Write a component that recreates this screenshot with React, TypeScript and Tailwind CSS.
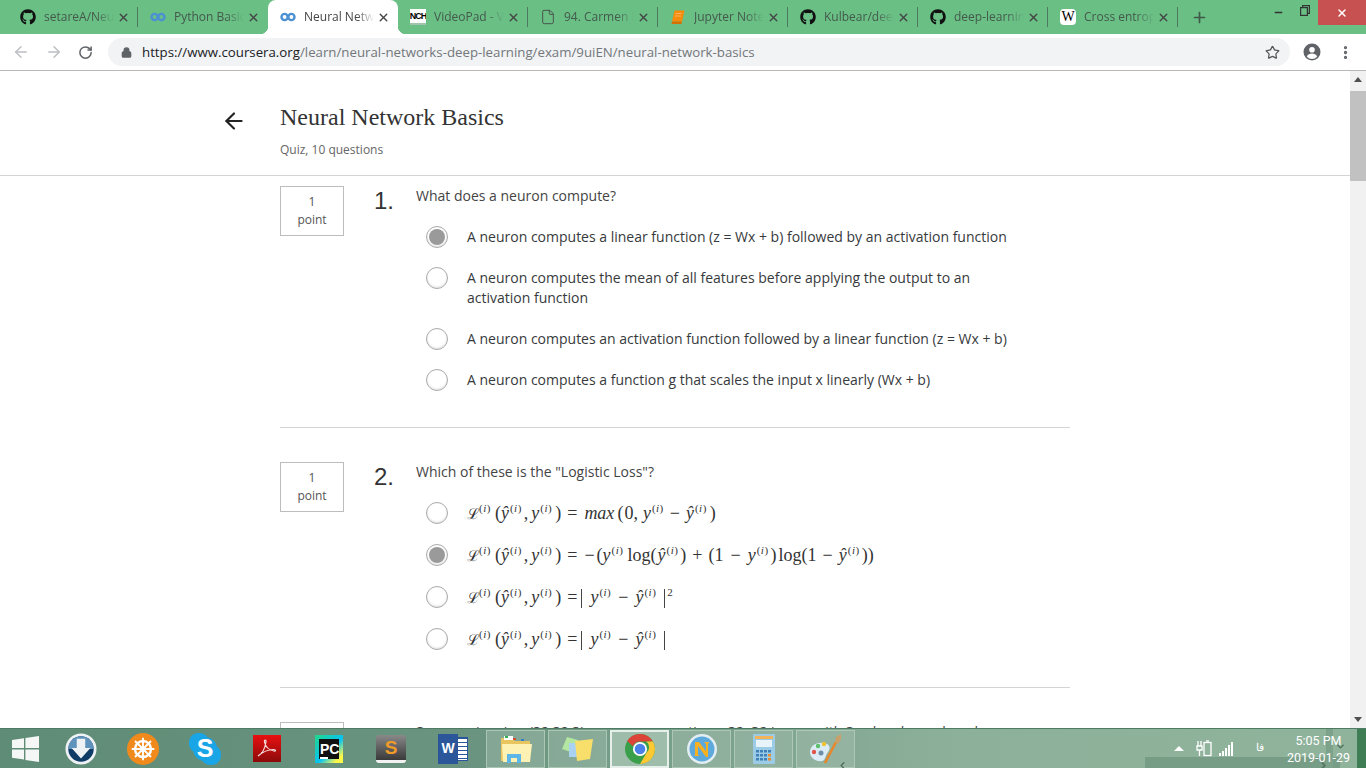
import { ReactNode } from 'react'
import { ArrowLeft, ArrowRight, RotateCw, Lock, Star, EllipsisVertical, X, Plus, File, Minus, ChevronLeft, ChevronDown, ChevronRight } from 'lucide-react'
import { FaGithub } from 'react-icons/fa'

function CourseraIcon() {
  return (
    <svg width="16" height="16" viewBox="0 0 16 16" fill="none" stroke="#4a90d2" strokeWidth="2.4">
      <circle cx="4.6" cy="8" r="3.1" />
      <circle cx="11.4" cy="8" r="3.1" />
    </svg>
  )
}

function NchIcon() {
  return (
    <div className="w-4 h-4 bg-white border-b-2 border-[#9fc4ab] flex items-center justify-center overflow-hidden">
      <span className="text-[9px] leading-none font-black tracking-[-1px] text-black font-['Liberation_Sans',sans-serif]">NCH</span>
    </div>
  )
}

function JupyterIcon() {
  return (
    <svg width="16" height="16" viewBox="0 0 16 16">
      <path d="M4.500 1.500h10l-2.500 11H2z" fill="#f58a0b" />
      <path d="M2 12.500h10l-.5 2.500H1.500z" fill="#d56f00" />
      <path d="M5.500 4.500h6M5 7h6" stroke="#fbb45e" strokeWidth="1" />
    </svg>
  )
}

function WikiIcon() {
  return (
    <div className="w-4 h-4 bg-white rounded-sm flex items-center justify-center text-[14px] leading-none text-black font-['Liberation_Serif',serif]">W</div>
  )
}

const tabs: { title: string; icon: ReactNode; active?: boolean }[] = [
  { title: 'setareA/Neural', icon: <FaGithub size={16} color="#111" /> },
  { title: 'Python Basics', icon: <CourseraIcon /> },
  { title: 'Neural Network', icon: <CourseraIcon />, active: true },
  { title: 'VideoPad - Video', icon: <NchIcon /> },
  { title: '94. Carmen Fantasy', icon: <File size={16} strokeWidth={1.3} color="#444" /> },
  { title: 'Jupyter Notebook', icon: <JupyterIcon /> },
  { title: 'Kulbear/deep', icon: <FaGithub size={16} color="#111" /> },
  { title: 'deep-learning', icon: <FaGithub size={16} color="#111" /> },
  { title: 'Cross entropy', icon: <WikiIcon /> },
]

function Tab({ title, icon, active, divider }: { title: string; icon: ReactNode; active?: boolean; divider: boolean }) {
  return (
    <div className={`relative w-[130px] h-[34px] flex items-center pl-[12px] shrink-0 ${active ? 'bg-white rounded-t-lg' : ''}`}>
      <div className="w-4 h-4 flex items-center justify-center shrink-0">{icon}</div>
      <div className={`ml-2 w-[70px] overflow-hidden whitespace-nowrap text-[12px] [mask-image:linear-gradient(to_right,black_75%,transparent)] ${active ? 'text-[#444]' : 'text-[#44594c]'}`}>
        {title}
      </div>
      <X size={13} strokeWidth={2.6} color="#444" className="ml-[3px] shrink-0" />
      {divider && <div className="absolute right-0 top-[7px] h-[20px] w-px bg-[#4d7a5e]" />}
      {active && (
        <>
          <div className="absolute -left-[8px] bottom-0 w-[8px] h-[8px] bg-[radial-gradient(circle_at_0_0,#6abf85_8px,white_8.500px)]" />
          <div className="absolute -right-[8px] bottom-0 w-[8px] h-[8px] bg-[radial-gradient(circle_at_100%_0,#6abf85_8px,white_8.500px)]" />
        </>
      )}
    </div>
  )
}

function TabBar() {
  return (
    <div className="h-[34px] bg-[#6abf85] flex pl-[8px] shrink-0 font-['Open_Sans',sans-serif]">
      {tabs.map((t, i) => (
        <Tab key={t.title} {...t} divider={!t.active && i !== 1} />
      ))}
      <div className="w-[42px] flex items-center justify-center">
        <Plus size={17} strokeWidth={2.4} color="#3f5a49" />
      </div>
      <div className="flex-1 flex justify-end items-start">
        <div className="w-[25px] h-[25px] flex items-center justify-center"><Minus size={11} strokeWidth={3} color="#333" /></div>
        <div className="w-[27px] h-[20px] flex items-center justify-center">
          <svg width="10" height="11" viewBox="0 0 10 11" fill="none" stroke="#333" strokeWidth="1.2"><rect x="0.6" y="2.6" width="6.8" height="7.8" /><path d="M2.6 2.4V.6h6.8v7.8H7.6" /></svg>
        </div>
        <div className="w-[48px] h-[25px] bg-[#c75050] flex items-center justify-center"><X size={12} strokeWidth={3} color="#fff" /></div>
      </div>
    </div>
  )
}

function Toolbar() {
  return (
    <div className="h-[37px] bg-white border-b border-[#b8b8b8] flex items-center shrink-0 font-['Open_Sans',sans-serif]">
      <div className="w-[108px] flex items-center pl-[12px] gap-[15px]">
        <ArrowLeft size={18} strokeWidth={2} color="#bcbfc3" />
        <ArrowRight size={18} strokeWidth={2} color="#bcbfc3" />
        <RotateCw size={15} strokeWidth={2.4} color="#5f6368" />
      </div>
      <div className="w-[1182px] h-[28px] bg-[#f1f3f4] rounded-full flex items-center pl-[13px] pr-[10px]">
        <Lock size={11} strokeWidth={3} color="#5f6368" fill="#5f6368" />
        <div className="ml-[10px] text-[13.250px] leading-[28px] text-[#73777c] whitespace-nowrap">
          <span className="text-[#202124]">https://www.coursera.org</span>/learn/neural-networks-deep-learning/exam/9uiEN/neural-network-basics
        </div>
        <Star size={15} strokeWidth={2} color="#555" className="ml-auto" />
      </div>
      <div className="flex-1 flex items-center pl-[13px]">
        <svg width="18" height="18" viewBox="0 0 18 18"><circle cx="9" cy="9" r="8.5" fill="#5f6368" /><circle cx="9" cy="6.8" r="2.8" fill="#fff" /><path d="M3.8 13.4c1-2 3.2-2.8 5.2-2.8s4.2.8 5.2 2.8A6.6 6.6 0 0 1 9 16a6.6 6.6 0 0 1-5.2-2.6z" fill="#fff" /></svg>
        <EllipsisVertical size={17} strokeWidth={2.6} color="#5f6368" className="ml-[16px]" />
      </div>
    </div>
  )
}

function Radio({ checked }: { checked?: boolean }) {
  return (
    <div className="w-[22px] h-[22px] -my-px rounded-full border border-[#aaa] bg-white flex items-center justify-center shrink-0 shadow-[inset_0_-1px_2px_rgba(0,0,0,0.12)]">
      {checked && <div className="w-[16px] h-[16px] rounded-full bg-[#9a9a9a]" />}
    </div>
  )
}

function Option({ checked, children }: { checked?: boolean; children: ReactNode }) {
  return (
    <div className="flex items-start pl-[10px]">
      <Radio checked={checked} />
      <div className="ml-[19px] w-[540px] text-[14px] leading-[20px] text-[#373a3c]">{children}</div>
    </div>
  )
}

function Question({ n, title, gap, children }: { n: number; title: string; gap: string; children: ReactNode }) {
  return (
    <div className="flex">
      <div className="w-[64px] h-[50px] border border-[#bdbdbd] flex flex-col items-center justify-center text-[12px] leading-[18px] text-[#555] shrink-0">
        <span>1</span>
        <span>point</span>
      </div>
      <div className="w-[42px] ml-[30px] text-[24px] leading-[30px] text-[#333] font-['Liberation_Sans',sans-serif] shrink-0">{n}.</div>
      <div className="flex-1">
        <div className="w-[570px] text-[14px] leading-[20px] text-[#444]">{title}</div>
        <div className={`flex flex-col ${gap}`}>{children}</div>
      </div>
    </div>
  )
}

// superscript "(i)" with the width the typeset formula has
const I = () => <span className="ml-[1px] text-[11px] leading-none tracking-[0.5px] relative -top-[7px]">(<i>i</i>)</span>
const Yh = () => <><i>ŷ</i><I /></>
const Y = () => <><i>y</i><I /></>
const Eq = () => <span className="ml-[6px] mr-[7px]">=</span>
const Sub = () => <span className="mx-[6px]">−</span>
const Bar = ({ className }: { className: string }) => <span className={`inline-block w-px h-[19px] bg-[#444] align-[-5px] ${className}`} />

const LossHead = () => (
  <>
    <span className="inline-block w-[11px] font-['DejaVu_Serif',serif] text-[15px]">ℒ</span>
    <I />
    <span className="ml-[4px]">(</span>
    <Yh />
    <span className="ml-[2px] mr-[3px]">,</span>
    <Y />
    <span className="ml-[3px]">)</span>
  </>
)

function MathLine({ children }: { children: ReactNode }) {
  return <div className="h-[20px] font-['Liberation_Serif',serif] text-[18px] leading-[20px] text-[#333] whitespace-nowrap">{children}</div>
}

function Quiz() {
  return (
    <div className="flex-1 min-w-0 overflow-hidden flex flex-col font-['Open_Sans',sans-serif]">
      <div className="h-[105px] border-b border-[#d4d4d4] pl-[221px] flex shrink-0">
        <div className="pt-[37px] w-[59px]"><ArrowLeft size={26} strokeWidth={2} color="#222" /></div>
        <div className="pt-[32px]">
          <div className="text-[24px] leading-[28px] text-[#333] font-['Liberation_Serif',serif]">Neural Network Basics</div>
          <div className="mt-[9px] text-[12px] leading-[20px] text-[#666]">Quiz, 10 questions</div>
        </div>
      </div>
      <div className="flex-1 pl-[280px] pt-[10px] w-[1070px] overflow-hidden">
        <Question n={1} title="What does a neuron compute?" gap="mt-[21px] gap-[21px]">
          <Option checked>A neuron computes a linear function (z = Wx + b) followed by an activation function</Option>
          <Option>A neuron computes the mean of all features before applying the output to an activation function</Option>
          <Option>A neuron computes an activation function followed by a linear function (z = Wx + b)</Option>
          <Option>A neuron computes a function g that scales the input x linearly (Wx + b)</Option>
        </Question>
        <div className="h-px bg-[#d4d4d4] mt-[37px] mb-[34px]" />
        <Question n={2} title={'Which of these is the "Logistic Loss"?'} gap="mt-[21px] gap-[22px]">
          <Option>
            <MathLine>
              <LossHead /><Eq /><i>max</i><span className="ml-[3px]">(</span><span className="ml-px">0</span>,<span className="ml-[5px]" /><Y /><Sub /><Yh /><span className="ml-[3px]">)</span>
            </MathLine>
          </Option>
          <Option checked>
            <MathLine>
              <LossHead /><Eq />−<span className="ml-[2px]">(</span><Y /><span className="ml-[4px]">log</span>(<span className="ml-px" /><Yh /><span className="ml-[2px]">)</span><span className="mx-[6px]">+</span>(1<span className="mx-[7px]">−</span><Y /><span className="ml-[2px]">)</span><span className="ml-[2px]">log</span>(1<Sub /><Yh /><span className="ml-[2px]">))</span>
            </MathLine>
          </Option>
          <Option>
            <MathLine>
              <LossHead /><Eq /><Bar className="-ml-[3px] mr-[8px]" /><Y /><span className="mx-[7px]">−</span><Yh /><Bar className="ml-[8px]" /><span className="ml-[2px] text-[11px] relative -top-[7px]">2</span>
            </MathLine>
          </Option>
          <Option>
            <MathLine>
              <LossHead /><Eq /><Bar className="-ml-[3px] mr-[8px]" /><Y /><span className="mx-[7px]">−</span><Yh /><Bar className="ml-[8px]" />
            </MathLine>
          </Option>
        </Question>
        <div className="h-px bg-[#d4d4d4] mt-[38px] mb-[34px]" />
        <Question n={3} title="Suppose img is a (32,32,3) array, representing a 32x32 image with 3 color channels red, green and blue. How do you reshape this into a column vector?" gap="">
          <span />
        </Question>
      </div>
    </div>
  )
}

function Scrollbar() {
  return (
    <div className="w-[16px] bg-[#f1f1f1] flex flex-col items-center shrink-0">
      <div className="h-[17px] flex items-center justify-center"><div className="w-0 h-0 border-x-[4px] border-x-transparent border-b-[5px] border-b-[#505050]" /></div>
      <div className="w-full h-[90px] mt-[3px] bg-[#c1c1c1]" />
      <div className="mt-auto h-[17px] flex items-center justify-center"><div className="w-0 h-0 border-x-[4px] border-x-transparent border-t-[5px] border-t-[#505050]" /></div>
    </div>
  )
}

function WinLogo() {
  return (
    <svg width="27" height="26" viewBox="0 0 27 26" fill="#f4f7f5">
      <path d="M0 4l12-1.8V12H0zM13.4 2L27 0v12H13.4zM0 13.4h12v10L0 21.8zM13.4 13.4H27V26l-13.6-2z" />
    </svg>
  )
}

const pinned: ReactNode[] = [
  <svg key="dl" width="32" height="32" viewBox="0 0 34 34"><circle cx="17" cy="17" r="16.500" fill="#eef2f5" /><circle cx="17" cy="17" r="13.500" fill="#0f3c66" /><path d="M17 3.500A13.500 13.500 0 0 1 30.500 17H3.500A13.500 13.500 0 0 1 17 3.500z" fill="#5f93bb" /><path d="M12.500 6h9v10h5.500L17 27 7 16h5.500z" fill="#eef2f5" /></svg>,
  <svg key="wheel" width="32" height="32" viewBox="0 0 34 34"><circle cx="17" cy="17" r="17" fill="#f08a1d" /><circle cx="17" cy="17" r="8.500" fill="none" stroke="#fff" strokeWidth="2.600" /><circle cx="17" cy="17" r="3" fill="#fff" /><path d="M17 5v24M5 17h24M8.500 8.500l17 17M25.500 8.500l-17 17" stroke="#fff" strokeWidth="2" /></svg>,
  <div key="skype" className="relative w-[30px] h-[30px] flex items-center justify-center">
    <div className="absolute -left-px -top-px w-[20px] h-[20px] rounded-[9px] bg-[#1aa5e6]" />
    <div className="absolute -right-px -bottom-px w-[20px] h-[20px] rounded-[9px] bg-[#1aa5e6]" />
    <div className="absolute inset-[3px] rounded-full bg-[#1aa5e6]" />
    <span className="relative text-white text-[25px] leading-none font-bold font-['Liberation_Sans',sans-serif]">S</span>
  </div>,
  <svg key="pdf" width="28" height="27" viewBox="0 0 28 27"><defs><linearGradient id="pdfg" x1="0" y1="0" x2="0" y2="1"><stop offset="0" stopColor="#e81010" /><stop offset="1" stopColor="#8c0a0a" /></linearGradient></defs><rect width="28" height="27" fill="url(#pdfg)" /><path d="M5 21c4-2 7-8 8-14 .4-2.500-2-2.500-1.500 0 .8 4 4 8 9.500 9 2 .4 2-1.500 0-1.500-5-.2-10 1.500-16 6.500z" fill="none" stroke="#f6dede" strokeWidth="1.200" /></svg>,
  <div key="pc" className="w-[28px] h-[28px] bg-[linear-gradient(135deg,#21d789_0%,#07c3f2_55%,#fcf84a_85%)] p-[4px] flex">
    <div className="flex-1 bg-[#111] text-white text-[14px] leading-[14px] font-bold pl-[1px] pt-[3px] font-['Liberation_Sans',sans-serif]">PC<div className="w-[8px] h-[2px] bg-white mt-[1px]" /></div>
  </div>,
  <div key="subl" className="w-[30px] h-[28px] rounded-[3px] bg-gradient-to-b from-[#8a8a8a] to-[#3a3a3a] border-b-[3px] border-[#f2f2f2] flex items-center justify-center text-[#f09a28] text-[19px] leading-none font-bold font-['Liberation_Sans',sans-serif]">S</div>,
  <div key="word" className="relative w-[30px] h-[30px] flex items-center">
    <div className="absolute right-0 top-[3px] w-[14px] h-[24px] bg-white border border-[#2b579a] bg-[repeating-linear-gradient(#2b579a_0_1px,white_1px_4px)]" />
    <div className="relative w-[20px] h-[30px] bg-[#2b579a] flex items-center justify-center text-white text-[14px] font-bold font-['Liberation_Sans',sans-serif]">W</div>
  </div>,
]

const boxed: ReactNode[] = [
  <svg key="folder" width="32" height="28" viewBox="0 0 32 28"><path d="M1 3h11l3 3h15v20H1z" fill="#e9c560" /><path d="M4 1h9v4H4z" fill="#fff" /><rect x="5" y="1" width="3" height="2" fill="#30b050" /><rect x="13" y="3" width="3" height="2" fill="#d05030" /><rect x="21" y="4" width="3" height="2" fill="#3080d0" /><path d="M2 9h30l-2 18H3z" fill="#fdf1b4" /><path d="M7 28v-9h14v9h-4v-5h-6v5z" fill="#5cb7e8" /></svg>,
  <svg key="notes" width="31" height="24" viewBox="0 0 31 24"><path d="M5 0l11 3-4 13L0 12z" fill="#b3e6a0" /><rect x="7" y="6" width="12" height="14" fill="#a9d2f2" /><path d="M13 4l18-2-3 20-13 2z" fill="#f8de6a" /></svg>,
  <svg key="chrome" width="30" height="30" viewBox="0 0 34 34"><circle cx="17" cy="17" r="17" fill="#3a9f4a" /><path d="M17 0a17 17 0 0 1 14.700 8.500H17a8.500 8.500 0 0 0-8 5.500L2.500 8A17 17 0 0 1 17 0z" fill="#db4437" /><path d="M31.700 8.500A17 17 0 0 1 17 34l7.300-12.500a8.500 8.500 0 0 0 0-13z" fill="#fcc934" /><circle cx="17" cy="17" r="8" fill="#fff" /><circle cx="17" cy="17" r="6" fill="#4a80e8" /></svg>,
  <svg key="nav" width="30" height="30" viewBox="0 0 30 30"><circle cx="15" cy="15" r="15" fill="#e3eef3" /><circle cx="15" cy="15" r="12.500" fill="#5da9dc" /><path d="M8 8h4l7 9V10l-2-2h5v1l-1 1v13h-2L11 12v9l2 1H7l1-1z" fill="#f6b022" /></svg>,
  <svg key="calc" width="22" height="30" viewBox="0 0 22 30"><rect width="22" height="30" rx="1" fill="#9ccbe6" /><rect x="2" y="2" width="18" height="3" fill="#f2b35b" /><rect x="3" y="6" width="16" height="7" fill="#e8f3fa" /><g fill="#3f80b8"><rect x="3" y="16" width="3" height="2.500" /><rect x="7" y="16" width="3" height="2.500" /><rect x="11" y="16" width="3" height="2.500" /><rect x="15" y="16" width="3" height="2.500" /><rect x="3" y="20" width="3" height="2.500" /><rect x="7" y="20" width="3" height="2.500" /><rect x="11" y="20" width="3" height="2.500" /><rect x="15" y="20" width="3" height="2.500" fill="#e88a2e" /><rect x="3" y="24" width="3" height="2.500" /><rect x="7" y="24" width="3" height="2.500" /><rect x="11" y="24" width="3" height="2.500" /><rect x="15" y="24" width="3" height="2.500" fill="#e88a2e" /></g></svg>,
  <svg key="paint" width="32" height="30" viewBox="0 0 32 30"><path d="M0 18c0-7 8-10 14-9 6 1 7 5 4 9-3 3-2 8-6 9-6 1-12-3-12-9z" fill="#dcecf7" /><circle cx="4" cy="18" r="2.200" fill="#e0564a" /><circle cx="8" cy="12" r="2.200" fill="#5cc06a" /><circle cx="14" cy="10" r="2.200" fill="#f0c22e" /><circle cx="11" cy="19" r="2.500" fill="#6f8fa8" /><path d="M15 29L26 8" stroke="#e8872a" strokeWidth="2.500" /><path d="M25 8l1-5 5-3 0 5-3 5z" fill="#c9a069" /></svg>,
]

function Taskbar() {
  return (
    <div className="relative h-[40px] bg-[linear-gradient(to_right,#5f8c76,#6a9480_35%,#8db09a_70%,#90b39c)] border-t border-[#4e7b64] flex items-center shrink-0 overflow-hidden">
      <div className="absolute left-[1145px] bottom-0 w-[195px] h-[11px] bg-[#6e947d]/70" />
      <div className="absolute left-[1326px] top-0 bottom-0 w-[7px] bg-[#7ca28b]" />
      <div className="absolute right-0 top-0 bottom-0 w-[9px] bg-[#3f7d55]" />
      <div className="relative w-[50px] flex justify-center shrink-0"><WinLogo /></div>
      {pinned.map((p, i) => (
        <div key={i} className="w-[62px] flex justify-center shrink-0">{p}</div>
      ))}
      <div className="relative flex gap-[3px] ml-[2px]">
        {boxed.map((b, i) => (
          <div key={i} className={`w-[59px] h-[38px] flex items-center justify-center ${i === 2 ? 'border-2 border-[#e6efe9] bg-[#a9c4b3]/80' : 'border border-[#b5cdbc]/80 bg-[#a9c4b3]/40'}`}>{b}</div>
        ))}
      </div>
      <div className="relative flex-1 flex items-center justify-end pr-[17px] text-white font-['Roboto',sans-serif]">
        <div className="w-0 h-0 border-x-[5px] border-x-transparent border-b-[5px] border-b-white mr-[12px]" />
        <svg width="16" height="17" viewBox="0 0 16 17" fill="none" stroke="#fff" strokeWidth="1.300"><path d="M2 1v5M5 1v5M1 6h5v4H1zM3.500 10v6" /><rect x="8" y="2.500" width="7" height="13" /><path d="M10 1h3" /></svg>
        <svg width="16" height="15" viewBox="0 0 16 15" fill="#fff" className="ml-[7px]"><rect x="0" y="12" width="2" height="3" /><rect x="3" y="10" width="2" height="5" /><rect x="6" y="7" width="2" height="8" /><rect x="9" y="4" width="2" height="11" /><rect x="12" y="1" width="2" height="14" /></svg>
        <span className="ml-[21px] text-[11px]">فا</span>
        <div className="ml-[24px] w-[61px] pt-[1px] flex flex-col items-center text-[12.500px] leading-[17px] whitespace-nowrap">
          <span>5:05 PM</span>
          <span>2019-01-29</span>
        </div>
      </div>
      <ChevronLeft size={11} strokeWidth={3} color="#4f6f5b" className="absolute left-[837px] bottom-[-3px]" />
      <ChevronDown size={11} strokeWidth={3} color="#4f6f5b" className="absolute left-[1335px] top-[12px]" />
      <ChevronRight size={11} strokeWidth={3} color="#4f6f5b" className="absolute left-[1318px] bottom-[-3px]" />
    </div>
  )
}

export default function App() {
  return (
    <div className="w-[1366px] h-[768px] flex flex-col overflow-hidden bg-white">
      <TabBar />
      <Toolbar />
      <div className="flex-1 flex min-h-0">
        <Quiz />
        <Scrollbar />
      </div>
      <Taskbar />
    </div>
  )
}
